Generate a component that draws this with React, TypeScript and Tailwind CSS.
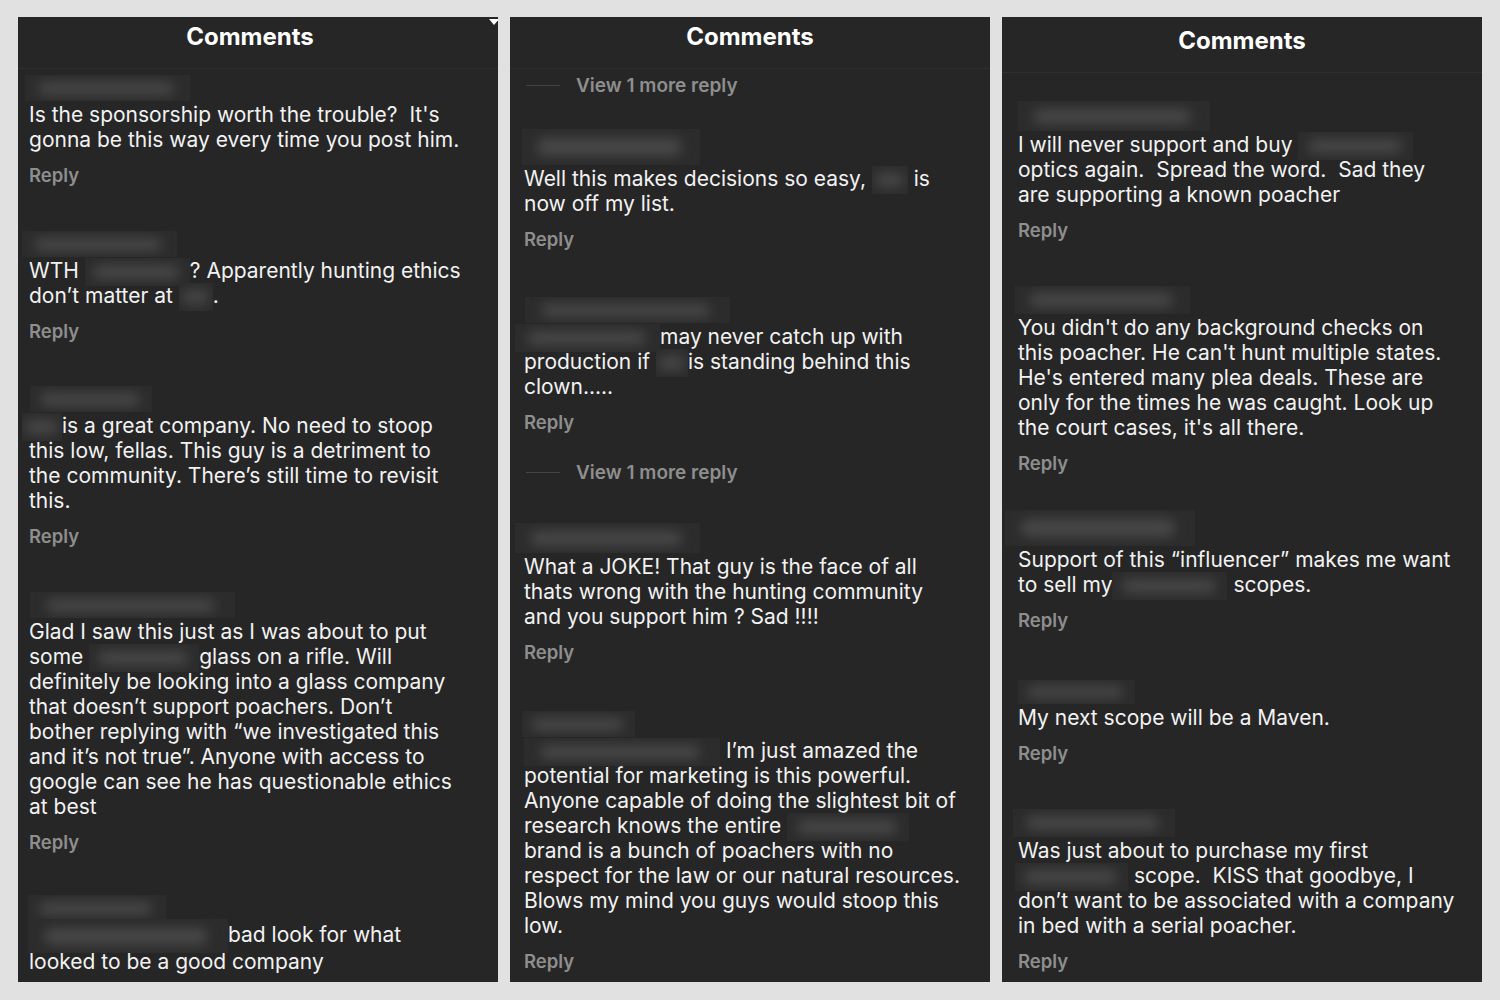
import React from 'react';

// blurred-out spans: { b: tailwind size classes }
type Part = string | { b: string };
type Line = Part | Part[];

type Item =
  | { kind: 'more'; mt: string }
  | { kind: 'comment'; mt: string; name: string; lines: Line[]; reply?: boolean };

interface Panel {
  pad: string;
  head: string;
  items: Item[];
}

const panels: Panel[] = [
  {
    pad: 'pl-[11px]',
    head: 'h-[52px] pt-[5px] pr-4',
    items: [
      { kind: 'comment', mt: 'mt-[5px]', name: 'w-[165px] h-[26px] -ml-[4px]', lines: ["Is the sponsorship worth the trouble?  It's", 'gonna be this way every time you post him.'] },
      { kind: 'comment', mt: 'mt-[45px]', name: 'w-[155px] h-[26px] -ml-[7px]', lines: [['WTH ', { b: 'w-[105px] h-[28px]' }, '? Apparently hunting ethics'], ['don’t matter at ', { b: 'w-[34px] h-[28px]' }, '.']] },
      {
        kind: 'comment', mt: 'mt-[44px]', name: 'w-[122px] h-[26px] ml-[1px]',
        lines: [[{ b: 'w-[40px] h-[28px] -ml-[7px]' }, 'is a great company. No need to stoop'], 'this low, fellas. This guy is a detriment to', 'the community. There’s still time to revisit', 'this.'],
      },
      {
        kind: 'comment', mt: 'mt-[45px]', name: 'w-[205px] h-[26px] ml-[1px]',
        lines: [
          'Glad I saw this just as I was about to put',
          ['some ', { b: 'w-[110px] h-[28px]' }, 'glass on a rifle. Will'],
          'definitely be looking into a glass company',
          'that doesn’t support poachers. Don’t',
          'bother replying with “we investigated this',
          'and it’s not true”. Anyone with access to',
          'google can see he has questionable ethics',
          'at best',
        ],
      },
      { kind: 'comment', mt: 'mt-[42px]', name: 'w-[138px] h-[26px] -ml-[1px]', reply: false, lines: [[{ b: 'w-[200px] h-[34px] -ml-[1px]' }, 'bad look for what'], 'looked to be a good company'] },
    ],
  },
  {
    pad: 'pl-[14px]',
    head: 'h-[52px] pt-[5px]',
    items: [
      { kind: 'more', mt: 'mt-[4px]' },
      { kind: 'comment', mt: 'mt-[33px]', name: 'w-[178px] h-[36px] -ml-[2px]', lines: [['Well this makes decisions so easy, ', { b: 'w-[36px] h-[28px]' }, ' is'], 'now off my list.'] },
      {
        kind: 'comment', mt: 'mt-[47px]', name: 'w-[205px] h-[26px] ml-[1px]',
        lines: [[{ b: 'w-[145px] h-[28px] -ml-[9px]' }, 'may never catch up with'], ['production if ', { b: 'w-[32px] h-[28px]' }, 'is standing behind this'], 'clown.....'],
      },
      { kind: 'more', mt: 'mt-[28px]' },
      {
        kind: 'comment', mt: 'mt-[40px]', name: 'w-[185px] h-[30px] -ml-[9px]',
        lines: ['What a JOKE! That guy is the face of all', 'thats wrong with the hunting community', 'and you support him ? Sad !!!!'],
      },
      {
        kind: 'comment', mt: 'mt-[48px]', name: 'w-[113px] h-[26px] -ml-[2px]',
        lines: [
          [{ b: 'w-[196px] h-[28px]' }, ' I’m just amazed the'],
          'potential for marketing is this powerful.',
          'Anyone capable of doing the slightest bit of',
          ['research knows the entire ', { b: 'w-[122px] h-[28px]' }],
          'brand is a bunch of poachers with no',
          'respect for the law or our natural resources.',
          'Blows my mind you guys would stoop this',
          'low.',
        ],
      },
    ],
  },
  {
    pad: 'pl-[16px]',
    head: 'h-[56px] pt-[9px]',
    items: [
      {
        kind: 'comment', mt: 'mt-[27px]', name: 'w-[192px] h-[30px] ml-0',
        lines: [['I will never support and buy ', { b: 'w-[115px] h-[28px]' }], 'optics again.  Spread the word.  Sad they', 'are supporting a known poacher'],
      },
      {
        kind: 'comment', mt: 'mt-[45px]', name: 'w-[175px] h-[28px] -ml-[3px]',
        lines: [
          "You didn't do any background checks on",
          "this poacher. He can't hunt multiple states.",
          "He's entered many plea deals. These are",
          'only for the times he was caught. Look up',
          "the court cases, it's all there.",
        ],
      },
      {
        kind: 'comment', mt: 'mt-[36px]', name: 'w-[190px] h-[36px] -ml-[13px]',
        lines: ['Support of this “influencer” makes me want', ['to sell my', { b: 'w-[115px] h-[28px]' }, ' scopes.']],
      },
      { kind: 'comment', mt: 'mt-[49px]', name: 'w-[117px] h-[24px] ml-0', lines: ['My next scope will be a Maven.'] },
      {
        kind: 'comment', mt: 'mt-[45px]', name: 'w-[162px] h-[28px] -ml-[5px]',
        lines: [
          'Was just about to purchase my first',
          [{ b: 'w-[113px] h-[28px] -ml-[3px]' }, ' scope.  KISS that goodbye, I'],
          'don’t want to be associated with a company',
          'in bed with a serial poacher.',
        ],
      },
    ],
  },
];

function Blur({ size, inline }: { size: string; inline?: boolean }) {
  return (
    <span className={`${inline ? 'inline-block align-middle -my-1' : 'block'} relative overflow-hidden bg-[#2c2c2c] ${size}`}>
      <span className="absolute left-[8%] right-[10%] top-[25%] bottom-[25%] rounded-full bg-[#474747] blur-[6px]" />
    </span>
  );
}

function TextLine({ line }: { line: Line }) {
  const parts = Array.isArray(line) ? line : [line];
  return (
    <div className="whitespace-pre">
      {parts.map((p, i) => (typeof p === 'string' ? <span key={i}>{p}</span> : <Blur key={i} size={p.b} inline />))}
    </div>
  );
}

function Reply() {
  return <div className="mt-3 text-[18.5px] leading-[22px] font-semibold text-[#8e8e8e]">Reply</div>;
}

export default function App() {
  return (
    <div className="w-[1500px] h-[1000px] bg-[#e1e1e1] flex gap-3 px-[18px] pt-[17px] overflow-hidden font-['Inter','Liberation_Sans',sans-serif]">
      {panels.map((panel, pi) => (
        <div key={pi} className="w-[480px] h-[965px] bg-[#262626] overflow-hidden flex flex-col shrink-0 relative">
          {pi === 0 && (
            <span className="absolute -right-[1px] top-[2px] w-0 h-0 border-l-[5px] border-r-[5px] border-t-[6px] border-l-transparent border-r-transparent border-t-white" />
          )}
          <div className={`flex justify-center border-b border-[#2f2f2f] shrink-0 text-white font-bold text-[24px] leading-[29px] ${panel.head}`}>
            Comments
          </div>
          <div className={`flex flex-col text-[21px] leading-[25px] text-[#f2f2f2] pt-[1px] ${panel.pad}`}>
            {panel.items.map((item, ii) =>
              item.kind === 'more' ? (
                <div key={ii} className={`flex items-center h-[22px] ${item.mt}`}>
                  <span className="w-[34px] h-px bg-[#444] ml-[2px]" />
                  <span className="ml-[16px] text-[19px] font-semibold text-[#8e8e8e]">View 1 more reply</span>
                </div>
              ) : (
                <div key={ii} className={`flex flex-col ${item.mt}`}>
                  <div className="mb-[1px]">
                    <Blur size={item.name} />
                  </div>
                  {item.lines.map((l, li) => (
                    <TextLine key={li} line={l} />
                  ))}
                  {item.reply !== false && <Reply />}
                </div>
              )
            )}
          </div>
        </div>
      ))}
    </div>
  );
}
